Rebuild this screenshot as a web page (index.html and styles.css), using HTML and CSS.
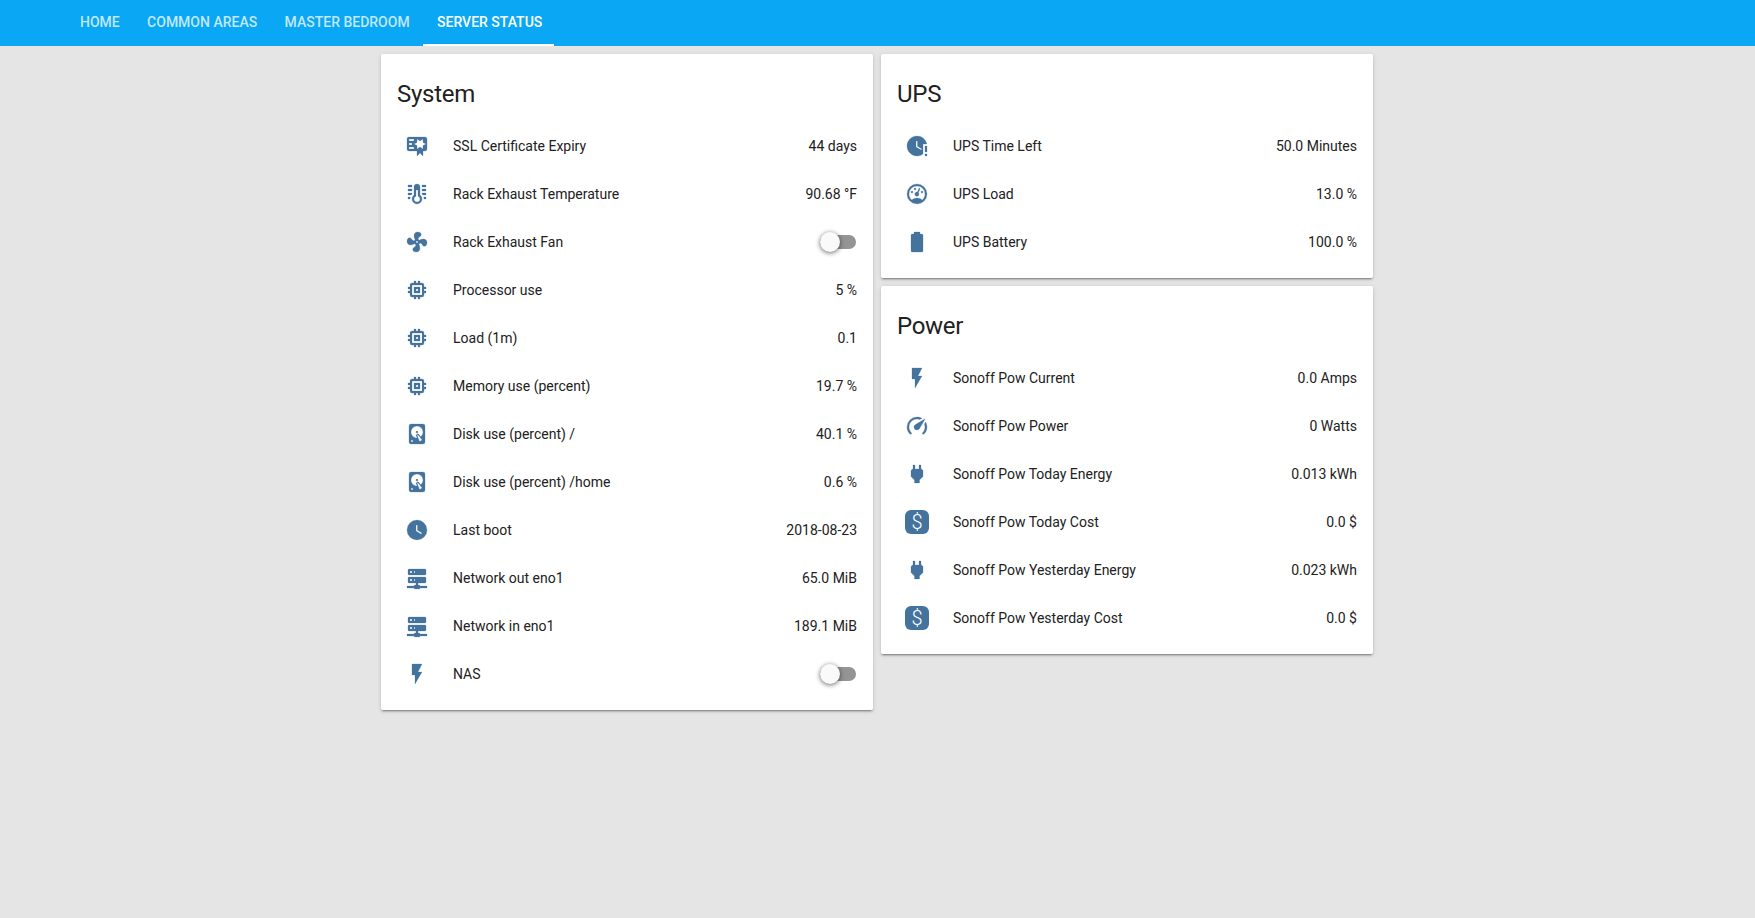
FILE: index.html
```html
<!DOCTYPE html>
<html lang="en">
<head>
<meta charset="utf-8">
<title>Server Status</title>
<link rel="stylesheet" href="styles.css">
</head>
<body>
<svg class="defs" width="0" height="0" aria-hidden="true">
<symbol id="i-cert" viewBox="0 0 24 24"><path d="M4,3C2.89,3 2,3.89 2,5V15A2,2 0 0,0 4,17H12V22L15,19L18,22V17H20A2,2 0 0,0 22,15V8L22,6V5A2,2 0 0,0 20,3H16V3H4M12,5L15,7L18,5V8.5L21,10L18,11.5V15L15,13L12,15V11.5L9,10L12,8.5V5M4,5H9V7H4V5M4,9H7V11H4V9M4,13H9V15H4V13Z"/></symbol>
<symbol id="i-therm" viewBox="0 0 24 24"><path d="M17,3H21V5H17V3M17,7H21V9H17V7M17,11H21V13H17.75L17,12.1V11M21,15V17H19C19,16.31 18.9,15.63 18.71,15H21M17,17A5,5 0 0,1 12,22A5,5 0 0,1 7,17C7,15.36 7.79,13.91 9,13V5A3,3 0 0,1 12,2A3,3 0 0,1 15,5V13C16.21,13.91 17,15.36 17,17M11,8V14.17C9.83,14.58 9,15.69 9,17A3,3 0 0,0 12,20A3,3 0 0,0 15,17C15,15.69 14.17,14.58 13,14.17V8H11M7,3V5H3V3H7M7,7V9H3V7H7M7,11V12.1L6.25,13H3V11H7M3,15H5.29C5.1,15.63 5,16.31 5,17H3V15Z"/></symbol>
<symbol id="i-fan" viewBox="0 0 24 24"><path d="M12,11A1,1 0 0,0 11,12A1,1 0 0,0 12,13A1,1 0 0,0 13,12A1,1 0 0,0 12,11M12.5,2C17,2 17.11,5.57 14.75,6.75C13.76,7.24 13.32,8.29 13.13,9.22C13.61,9.42 14.03,9.73 14.35,10.13C18.05,8.13 22.03,8.92 22.03,12.5C22.03,17 18.46,17.1 17.28,14.73C16.78,13.74 15.72,13.3 14.79,13.11C14.59,13.59 14.28,14 13.88,14.34C15.87,18.03 15.08,22 11.5,22C7,22 6.91,18.42 9.27,17.24C10.25,16.75 10.69,15.71 10.89,14.79C10.4,14.59 9.97,14.27 9.65,13.87C5.96,15.85 2,15.07 2,11.5C2,7 5.56,6.89 6.74,9.26C7.24,10.25 8.29,10.68 9.22,10.87C9.41,10.39 9.73,9.97 10.14,9.65C8.15,5.96 8.94,2 12.5,2Z"/></symbol>
<symbol id="i-chip" viewBox="0 0 24 24"><path d="M17,17H7V7H17M21,11V9H19V7C19,5.89 18.1,5 17,5H15V3H13V5H11V3H9V5H7C5.89,5 5,5.89 5,7V9H3V11H5V13H3V15H5V17A2,2 0 0,0 7,19H9V21H11V19H13V21H15V19H17A2,2 0 0,0 19,17V15H21V13H19V11M13,13H11V11H13M15,9H9V15H15V9Z"/></symbol>
<symbol id="i-disk" viewBox="0 0 24 24"><path d="M6,2H18A2,2 0 0,1 20,4V20A2,2 0 0,1 18,22H6A2,2 0 0,1 4,20V4A2,2 0 0,1 6,2M12,4A6,6 0 0,0 6,10C6,13.31 8.69,16 12.1,16L11.22,13.77C10.95,13.29 11.11,12.68 11.59,12.4L12.45,11.9C12.93,11.63 13.54,11.79 13.82,12.27L15.74,14.69C17.12,13.59 18,11.9 18,10A6,6 0 0,0 12,4M12,9A1,1 0 0,1 13,10A1,1 0 0,1 12,11A1,1 0 0,1 11,10A1,1 0 0,1 12,9M7,18A1,1 0 0,0 6,19A1,1 0 0,0 7,20A1,1 0 0,0 8,19A1,1 0 0,0 7,18M12.09,13.27L14.58,19.58L17.17,18.08L12.95,12.77L12.09,13.27Z"/></symbol>
<symbol id="i-clock" viewBox="0 0 24 24"><path d="M12,2A10,10 0 0,0 2,12A10,10 0 0,0 12,22A10,10 0 0,0 22,12A10,10 0 0,0 12,2M16.2,16.2L11,13V7H12.5V12.2L17,14.9L16.2,16.2Z"/></symbol>
<symbol id="i-net" viewBox="0 0 24 24"><path d="M13,19H14A1,1 0 0,1 15,20H22V22H15A1,1 0 0,1 14,23H10A1,1 0 0,1 9,22H2V20H9A1,1 0 0,1 10,19H11V17H4A1,1 0 0,1 3,16V12A1,1 0 0,1 4,11H20A1,1 0 0,1 21,12V16A1,1 0 0,1 20,17H13V19M4,3H20A1,1 0 0,1 21,4V8A1,1 0 0,1 20,9H4A1,1 0 0,1 3,8V4A1,1 0 0,1 4,3M9,7H10V5H9V7M9,15H10V13H9V15M5,5V7H7V5H5M5,13V15H7V13H5Z"/></symbol>
<symbol id="i-flash" viewBox="0 0 24 24"><path d="M7,2V13H10V22L17,10H13L17,2H7Z"/></symbol>
<symbol id="i-clockalert" viewBox="0 0 24 24"><path fill-rule="evenodd" d="M20,12V18H22V12H20M20,20V22H22V20H20M12,2C6.5,2 2,6.5 2,12C2,17.5 6.5,22 12,22C14.3,22 16.4,21.2 18,20V10H21.8C20.9,5.4 16.8,2 12,2M11,7H12.5V12.2L17,14.9L16.2,16.1L11,13V7Z"/></symbol>
<symbol id="i-gauge" viewBox="0 0 24 24"><path d="M17.3,18C19,16.5 20,14.4 20,12A8,8 0 0,0 12,4A8,8 0 0,0 4,12C4,14.4 5,16.5 6.7,18C8.2,16.7 10,16 12,16C14,16 15.9,16.7 17.3,18M12,2A10,10 0 0,1 22,12A10,10 0 0,1 12,22A10,10 0 0,1 2,12A10,10 0 0,1 12,2M7,9A1,1 0 0,1 8,10A1,1 0 0,1 7,11A1,1 0 0,1 6,10A1,1 0 0,1 7,9M10,6A1,1 0 0,1 11,7A1,1 0 0,1 10,8A1,1 0 0,1 9,7A1,1 0 0,1 10,6M17,9A1,1 0 0,1 18,10A1,1 0 0,1 17,11A1,1 0 0,1 16,10A1,1 0 0,1 17,9M14.4,6.1C14.9,6.3 15.1,6.8 14.9,7.2L13.4,10.8C14,11.5 14.2,12.5 13.7,13.3C13.2,14.3 11.9,14.6 10.9,14.1C9.9,13.6 9.6,12.3 10.1,11.3C10.6,10.5 11.5,10 12.4,10.1L13.9,6.5C14,6.1 14.1,6 14.4,6.1Z"/></symbol>
<symbol id="i-battery" viewBox="0 0 24 24"><path d="M16.67,4H15V2H9V4H7.33A1.33,1.33 0 0,0 6,5.33V20.67C6,21.4 6.6,22 7.33,22H16.67A1.33,1.33 0 0,0 18,20.67V5.33C18,4.6 17.4,4 16.67,4Z"/></symbol>
<symbol id="i-speed" viewBox="0 0 24 24"><path d="M12,16A3,3 0 0,1 9,13C9,11.88 9.61,10.9 10.5,10.39L20.21,4.77L14.68,14.35C14.18,15.33 13.17,16 12,16M12,3C13.81,3 15.5,3.5 16.97,4.32L14.87,5.53C14,5.19 13,5 12,5A8,8 0 0,0 4,13C4,15.21 4.89,17.21 6.34,18.65H6.35C6.74,19.04 6.74,19.67 6.35,20.06C5.96,20.45 5.32,20.45 4.93,20.07V20.07C3.12,18.26 2,15.76 2,13A10,10 0 0,1 12,3M22,13C22,15.76 20.88,18.26 19.07,20.07V20.07C18.68,20.45 18.05,20.45 17.66,20.06C17.27,19.67 17.27,19.04 17.66,18.65V18.65C19.11,17.2 20,15.21 20,13C20,12 19.81,11 19.46,10.1L20.68,8C21.5,9.5 22,11.18 22,13Z"/></symbol>
<symbol id="i-plug" viewBox="0 0 24 24"><path d="M16,7V3H14V7H10V3H8V7C7,7 6,8 6,9V14.5L9.5,18V21H14.5V18L18,14.5V9C18,8 17,7 16,7Z"/></symbol>
</svg>

<header class="toolbar">
  <nav class="tabs">
    <a class="tab">Home</a>
    <a class="tab">Common Areas</a>
    <a class="tab">Master Bedroom</a>
    <a class="tab tab-active">Server Status</a>
  </nav>
</header>

<main class="columns">
  <div class="column">
    <section class="card">
      <h1 class="card-title">System</h1>
      <div class="row"><svg class="icon"><use href="#i-cert"/></svg><span class="name">SSL Certificate Expiry</span><span class="value">44 days</span></div>
      <div class="row"><svg class="icon"><use href="#i-therm"/></svg><span class="name">Rack Exhaust Temperature</span><span class="value">90.68 °F</span></div>
      <div class="row"><svg class="icon"><use href="#i-fan"/></svg><span class="name">Rack Exhaust Fan</span><span class="toggle"><span class="knob"></span></span></div>
      <div class="row"><svg class="icon"><use href="#i-chip"/></svg><span class="name">Processor use</span><span class="value">5 %</span></div>
      <div class="row"><svg class="icon"><use href="#i-chip"/></svg><span class="name">Load (1m)</span><span class="value">0.1</span></div>
      <div class="row"><svg class="icon"><use href="#i-chip"/></svg><span class="name">Memory use (percent)</span><span class="value">19.7 %</span></div>
      <div class="row"><svg class="icon"><use href="#i-disk"/></svg><span class="name">Disk use (percent) /</span><span class="value">40.1 %</span></div>
      <div class="row"><svg class="icon"><use href="#i-disk"/></svg><span class="name">Disk use (percent) /home</span><span class="value">0.6 %</span></div>
      <div class="row"><svg class="icon"><use href="#i-clock"/></svg><span class="name">Last boot</span><span class="value">2018-08-23</span></div>
      <div class="row"><svg class="icon"><use href="#i-net"/></svg><span class="name">Network out eno1</span><span class="value">65.0 MiB</span></div>
      <div class="row"><svg class="icon"><use href="#i-net"/></svg><span class="name">Network in eno1</span><span class="value">189.1 MiB</span></div>
      <div class="row"><svg class="icon"><use href="#i-flash"/></svg><span class="name">NAS</span><span class="toggle"><span class="knob"></span></span></div>
    </section>
  </div>
  <div class="column">
    <section class="card">
      <h1 class="card-title">UPS</h1>
      <div class="row"><svg class="icon"><use href="#i-clockalert"/></svg><span class="name">UPS Time Left</span><span class="value">50.0 Minutes</span></div>
      <div class="row"><svg class="icon"><use href="#i-gauge"/></svg><span class="name">UPS Load</span><span class="value">13.0 %</span></div>
      <div class="row"><svg class="icon"><use href="#i-battery"/></svg><span class="name">UPS Battery</span><span class="value">100.0 %</span></div>
    </section>
    <section class="card">
      <h1 class="card-title">Power</h1>
      <div class="row"><svg class="icon"><use href="#i-flash"/></svg><span class="name">Sonoff Pow Current</span><span class="value">0.0 Amps</span></div>
      <div class="row"><svg class="icon"><use href="#i-speed"/></svg><span class="name">Sonoff Pow Power</span><span class="value">0 Watts</span></div>
      <div class="row"><svg class="icon"><use href="#i-plug"/></svg><span class="name">Sonoff Pow Today Energy</span><span class="value">0.013 kWh</span></div>
      <div class="row"><span class="cost">$</span><span class="name">Sonoff Pow Today Cost</span><span class="value">0.0 $</span></div>
      <div class="row"><svg class="icon"><use href="#i-plug"/></svg><span class="name">Sonoff Pow Yesterday Energy</span><span class="value">0.023 kWh</span></div>
      <div class="row"><span class="cost">$</span><span class="name">Sonoff Pow Yesterday Cost</span><span class="value">0.0 $</span></div>
    </section>
  </div>
</main>
</body>
</html>
```

FILE: styles.css
```css
* { box-sizing: border-box; }
html, body { height: 100%; }
body {
  margin: 0;
  background: #e5e5e5;
  color: #212121;
  font-family: Roboto, "Liberation Sans", sans-serif;
  font-size: 14px;
  overflow: hidden;
}
.defs { display: block; height: 0; }

.toolbar { height: 46px; background: #0aa8f4; }
.tabs { display: flex; height: 46px; padding-left: 66.3px; }
.tab {
  display: flex;
  align-items: center;
  height: 46px;
  padding: 0 13.7px 2px;
  color: rgba(255, 255, 255, .75);
  font-size: 14px;
  font-weight: 500;
  text-transform: uppercase;
}
.tab-active { color: #fff; border-bottom: 2px solid #fff; padding: 0 11.5px 0 13.7px; }

.columns { display: flex; justify-content: center; gap: 8px; padding: 8px 1px 0 0; }
.column { width: 492px; display: flex; flex-direction: column; gap: 8px; }
.card {
  padding-bottom: 12px;
  background: #fff;
  border-radius: 2px;
  box-shadow: 0 2px 2px rgba(0,0,0,.14), 0 1px 5px rgba(0,0,0,.12), 0 3px 1px -2px rgba(0,0,0,.2);
}
.card-title {
  margin: 0;
  padding: 24px 16px 12px;
  font-size: 24px;
  font-weight: 400;
  line-height: 32px;
  letter-spacing: -.012em;
}
.row { display: flex; align-items: center; height: 48px; padding: 0 16px; }
.icon { flex: none; width: 24px; height: 24px; margin: 0 8px; fill: #44739e; stroke: #44739e; stroke-width: .25px; }
.cost {
  flex: none;
  width: 24px;
  height: 24px;
  margin: 0 8px;
  border-radius: 6px;
  background: #44739e;
  color: #fff;
  font-size: 20px;
  font-weight: 300;
  line-height: 24px;
  text-align: center;
}
.name { flex: 1; margin-left: 16px; }
.value { white-space: nowrap; }
.toggle {
  position: relative;
  width: 36px;
  height: 14px;
  margin-right: 1px;
  border-radius: 7px;
  background: #949494;
}
.knob {
  position: absolute;
  top: -3px;
  left: 0;
  width: 20px;
  height: 20px;
  border-radius: 50%;
  background: #fafafa;
  box-shadow: 0 1px 5px rgba(0,0,0,.6);
}
```
